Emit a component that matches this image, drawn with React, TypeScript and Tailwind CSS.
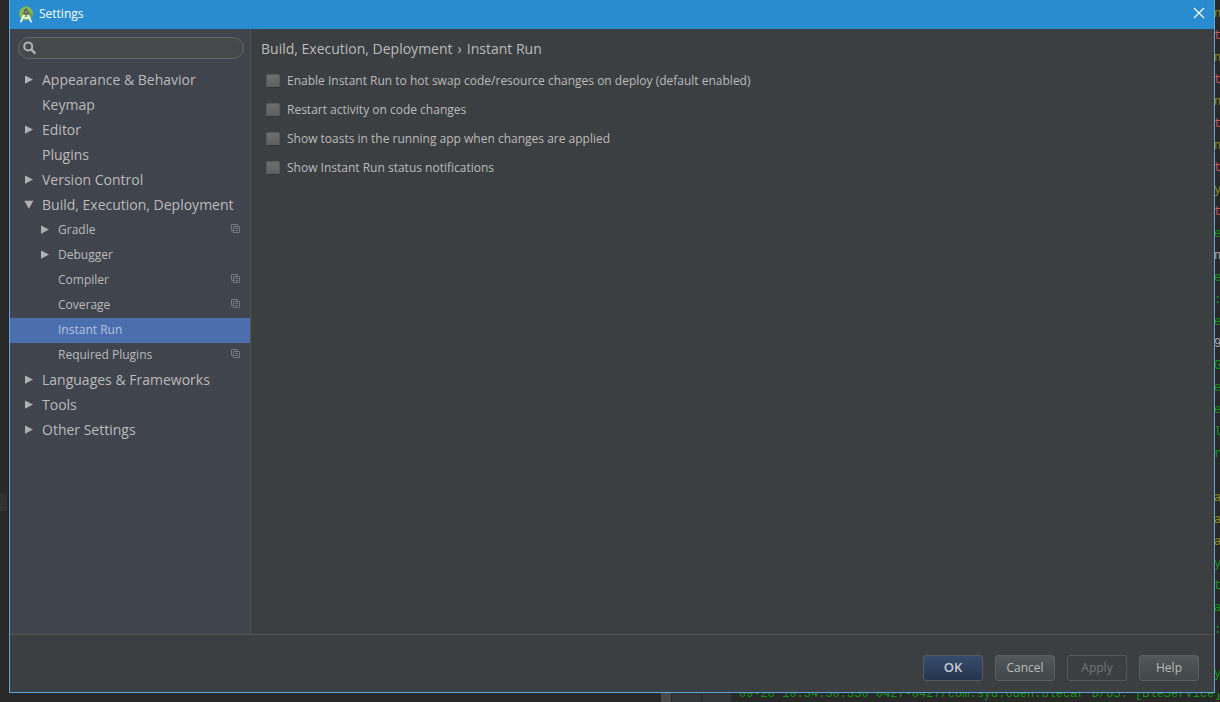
import React, { useState } from 'react';

type Node = {
  label: string;
  level: 0 | 1;
  arrow?: 'right' | 'down';
  project?: boolean;
};

const NODES: Node[] = [
  { label: 'Appearance & Behavior', level: 0, arrow: 'right' },
  { label: 'Keymap', level: 0 },
  { label: 'Editor', level: 0, arrow: 'right' },
  { label: 'Plugins', level: 0 },
  { label: 'Version Control', level: 0, arrow: 'right' },
  { label: 'Build, Execution, Deployment', level: 0, arrow: 'down' },
  { label: 'Gradle', level: 1, arrow: 'right', project: true },
  { label: 'Debugger', level: 1, arrow: 'right' },
  { label: 'Compiler', level: 1, project: true },
  { label: 'Coverage', level: 1, project: true },
  { label: 'Instant Run', level: 1 },
  { label: 'Required Plugins', level: 1, project: true },
  { label: 'Languages & Frameworks', level: 0, arrow: 'right' },
  { label: 'Tools', level: 0, arrow: 'right' },
  { label: 'Other Settings', level: 0, arrow: 'right' },
];

const OPTIONS = [
  'Enable Instant Run to hot swap code/resource changes on deploy (default enabled)',
  'Restart activity on code changes',
  'Show toasts in the running app when changes are applied',
  'Show Instant Run status notifications',
];

const OLIVE = 'text-[#8f8b1c]';
const RED = 'text-[#c75450]';
const GREEN = 'text-[#149414]';
const GRAY = 'text-[#a9a9a9]';

const EDITOR_EDGE: [string, string][] = [
  ['n', OLIVE], ['t', RED], ['n', OLIVE], ['t', RED], ['n', OLIVE], ['t', RED],
  ['n', OLIVE], ['t', RED], ['y', OLIVE], ['t', RED], ['e', GREEN], ['n', GRAY],
  ['e', GREEN], [':', GREEN], ['e', GREEN], ['9', GRAY], ['G', GREEN], ['e', GREEN],
  ['e', GREEN], ['l', GREEN], ['r', GREEN], ['', GREEN], ['a', OLIVE], ['a', OLIVE],
  ['a', OLIVE], ['y', GREEN], ['t', GREEN], ['a', GREEN], [':', GREEN], ['', GREEN],
  ['y', GREEN],
];

function AppLogo() {
  return (
    <svg width="16" height="18" viewBox="0 0 16 18" aria-hidden="true">
      <circle cx="8" cy="7.6" r="7" fill="#86b84a" />
      <path d="M9.5 5 14.9 8.5A7 7 0 0 1 12 13.3L8 9z" fill="#6a9f3f" />
      <path d="M7.2 2.4h1.6v2H7.2z" fill="#4f585c" />
      <path d="M8 3.6a2.3 2.3 0 0 1 2.3 2.3L11.4 9 8.8 8.4 8 7.4 7.2 8.4 4.6 9 5.7 5.9A2.3 2.3 0 0 1 8 3.6z" fill="#56605f" />
      <circle cx="8" cy="6" r="0.9" fill="#a8b8a0" />
      <path d="M5 8.6 2.2 15.2l.2 1.6 1.4-.9L7 9z" fill="#f4f6f7" />
      <path d="M11 8.6l2.8 6.6-.2 1.6-1.4-.9L9 9z" fill="#f4f6f7" />
      <path d="M4.6 10.6q3.4 3 6.8 0" fill="none" stroke="#f4f6f7" strokeWidth="1.6" />
    </svg>
  );
}

function Arrow({ kind }: { kind?: 'right' | 'down' }) {
  return (
    <svg width="10" height="10" viewBox="0 0 10 10" className="shrink-0" aria-hidden="true">
      {kind === 'right' && <path d="M1 0.5 9 4.5 1 8.8z" fill="#afb1b3" />}
      {kind === 'down' && <path d="M0.3 0.8h9L4.8 8.8z" fill="#afb1b3" />}
    </svg>
  );
}

function ProjectIcon() {
  return (
    <svg width="9" height="9" viewBox="0 0 9 9" className="mb-[2px] ml-auto shrink-0" fill="none" stroke="#74797f" aria-hidden="true">
      <path d="M2.5 6.5h-2v-6h6v2" />
      <path d="M2.5 2.5h6v6h-6z" />
      <path d="M4 4.5h3M4 6.5h3" />
    </svg>
  );
}

function TreeRow({ node, selected, onSelect }: { node: Node; selected: boolean; onSelect: () => void }) {
  return (
    <li>
      <button
        type="button"
        onClick={onSelect}
        className={`flex h-[25px] w-full items-center gap-2 pr-[10px] pb-[2px] text-left whitespace-nowrap ${
          selected ? 'bg-[#4b6eaf] text-[#b6c3dd]' : ''
        } ${node.level === 0 ? 'pl-[14px] text-[14px]' : 'pl-[30px] text-[12px]'}`}
      >
        <Arrow kind={node.arrow} />
        <span className={node.level === 0 ? 'pb-px' : 'pt-px'}>{node.label}</span>
        {node.project && <ProjectIcon />}
      </button>
    </li>
  );
}

export default function App() {
  const [current, setCurrent] = useState('Instant Run');
  const plain =
    'h-[26px] w-[60px] rounded-[3px] border border-[#5b5f61] bg-linear-to-b from-[#52585b] to-[#424749] text-[#bbbbbb]';

  return (
    <div className="flex h-screen flex-col overflow-hidden bg-[#292929] font-['Open_Sans','Noto_Sans',sans-serif] text-[12px] text-[#bbbbbb]">
      <div className="flex min-h-0 flex-1">
        <div className="flex w-[9px] shrink-0 flex-col border-r border-[#262626]">
          <div className="mt-[494px] h-[17px] w-[7px] bg-[#323232]" />
          <div className="min-h-0 flex-1" />
        </div>

        <div className="flex min-w-0 flex-1 flex-col border border-t-0 border-[#5ea6de] bg-[#3c3f41]">
          <header className="flex h-[29px] shrink-0 items-center bg-[#2a8cd0] pr-[9px] pl-2 text-white">
            <AppLogo />
            <h1 className="ml-[5px] pb-px text-[12px]">Settings</h1>
            <button type="button" aria-label="Close" className="ml-auto flex size-3 items-center justify-center pb-1">
              <svg width="12" height="12" viewBox="0 0 12 12" className="shrink-0" stroke="white" strokeWidth="1.2" aria-hidden="true">
                <path d="M1 1 11 11M11 1 1 11" />
              </svg>
            </button>
          </header>

          <div className="flex min-h-0 flex-1">
            <nav className="w-[241px] shrink-0 border-r border-[#515554] bg-[#40444d]">
              <div className="mx-2 mt-2 mr-[6px] flex h-[22px] items-center rounded-full border border-[#646866] bg-[#45494a] pl-1">
                <svg width="14" height="14" viewBox="0 0 14 14" fill="none" stroke="#afb1b3" strokeWidth="2" aria-hidden="true">
                  <circle cx="5.2" cy="5.4" r="4" />
                  <path d="M8.2 8.4 12.4 12.6" strokeWidth="2.4" />
                </svg>
                <input type="text" aria-label="Search settings" className="h-full min-w-0 flex-1 bg-transparent px-1 outline-none" />
              </div>
              <ul className="mt-[9px]">
                {NODES.map((n) => (
                  <TreeRow key={n.label} node={n} selected={n.label === current} onSelect={() => setCurrent(n.label)} />
                ))}
              </ul>
            </nav>

            <main className="min-w-0 flex-1 px-[10px] pt-[9px]">
              <h2 className="flex h-5 items-center gap-[5px] text-[14px]">
                <span>Build, Execution, Deployment</span>
                <span>›</span>
                <span>Instant Run</span>
              </h2>
              <div className="mt-2 flex flex-col pl-[5px]">
                {OPTIONS.map((o) => (
                  <label key={o} className="flex h-[29px] items-center gap-[7px] whitespace-nowrap">
                    <input
                      type="checkbox"
                      className="size-[14px] appearance-none rounded-[2px] border border-[#585b5d] border-b-[#313435] bg-linear-to-b from-[#6e6e6e] to-[#5f5f5f] checked:from-[#4b6eaf] checked:to-[#4b6eaf]"
                    />
                    <span>{o}</span>
                  </label>
                ))}
              </div>
            </main>
          </div>

          <footer className="flex h-[58px] shrink-0 items-center justify-end gap-3 border-t border-[#555555] pt-[9px] pr-[15px] pb-px">
            <button
              type="button"
              className="h-[26px] w-[60px] rounded-[3px] border border-[#555a5e] bg-linear-to-b from-[#374c6b] to-[#25354f] text-[13px] font-semibold text-[#c6cbd2]"
            >
              OK
            </button>
            <button type="button" className={plain}>Cancel</button>
            <button type="button" disabled className="h-[26px] w-[60px] rounded-[3px] border border-[#55585a] text-[#737577]">
              Apply
            </button>
            <button type="button" className={plain}>Help</button>
          </footer>
        </div>

        <div className="flex w-[5px] shrink-0 flex-col overflow-hidden pt-[3px] font-['Liberation_Mono',monospace] text-[12px]">
          {EDITOR_EDGE.map(([ch, color], i) => (
            <span key={i} className={`flex h-[22px] shrink-0 items-center justify-center ${color}`}>
              {ch}
            </span>
          ))}
        </div>
      </div>

      <div className="flex h-[9px] shrink-0 items-end overflow-hidden">
        <div className="ml-[661px] flex h-full w-[70px] shrink-0 gap-px">
          <div className="w-[10px] bg-[#4a4a4a]" />
          <div className="w-[29px] bg-[#343638]" />
          <div className="flex-1 bg-[#343638]" />
        </div>
        <pre className="ml-2 pb-px font-['Liberation_Mono',monospace] text-[12px] leading-[14px] text-[#149414]">
          09-28 10:34:30.330 0427-0427/com.syd.oden.blecar D/US: [BleService]
        </pre>
      </div>
    </div>
  );
}
